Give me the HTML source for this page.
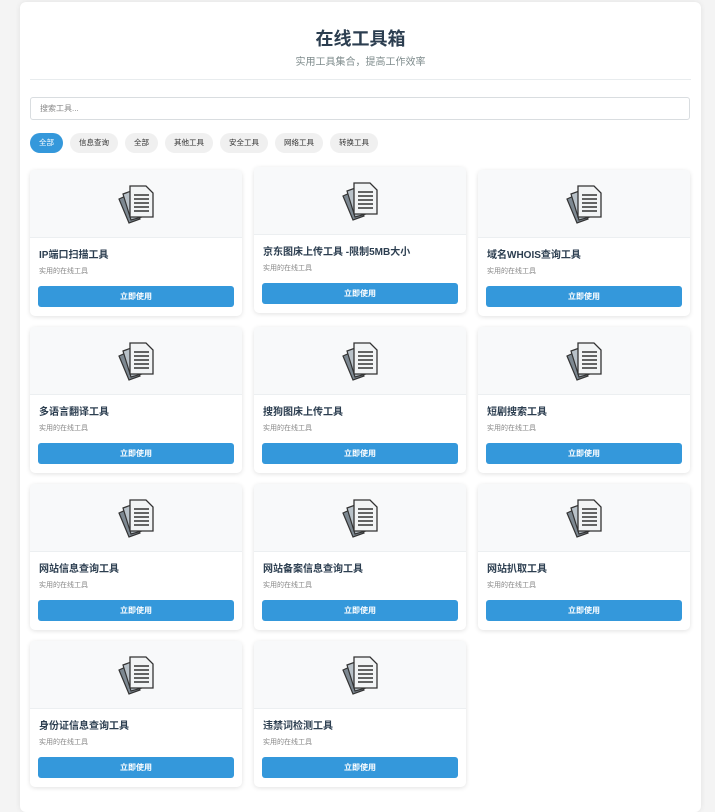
<!DOCTYPE html>
<html><head><meta charset="utf-8"><style>
*{margin:0;padding:0;box-sizing:border-box}
body{width:715px;height:800px;background:#f4f4f4;font-family:"Liberation Sans","Noto Sans CJK SC",sans-serif;overflow:hidden;position:relative}
.wrap{position:absolute;left:20px;top:2px;width:681px;height:810px;background:#fff;border-radius:6px;box-shadow:0 0 6px rgba(0,0,0,.08)}
h1{position:absolute;left:0;width:100%;top:26px;text-align:center;font-size:18px;color:#2c3e50;font-weight:bold;line-height:22px}
.sub{position:absolute;left:0;width:100%;top:54px;text-align:center;font-size:10px;color:#7f8c8d;line-height:14px}
.hr{position:absolute;left:10px;right:10px;top:77px;border-top:1px solid #e8ecee}
.search{position:absolute;left:10px;top:95px;width:660px;height:23px;border:1px solid #d9dde0;border-radius:3px;font-size:8px;color:#888;padding-left:9px;line-height:21px}
.chips{position:absolute;left:10px;top:131px;display:flex;gap:7px}
.chip{height:20px;border-radius:10px;background:#f0f0f0;color:#333;font-size:7.5px;line-height:20px;padding:0 9px}
.chip.on{background:#3498db;color:#fff}
.card{position:absolute;width:212px;height:146px;background:#fff;border-radius:5px;box-shadow:0 1px 5px rgba(0,0,0,.12);overflow:hidden}
.img{height:68px;background:#f8f9fa;border-bottom:1px solid #eceff1;display:flex;align-items:center;justify-content:center}
.t{position:absolute;left:9px;top:79px;font-size:10px;font-weight:bold;color:#2c3e50;line-height:14px;white-space:nowrap}
.s{position:absolute;left:9px;top:97px;font-size:7px;color:#888;line-height:10px}
.b{position:absolute;left:8px;right:8px;top:116px;height:21px;background:#3498db;border-radius:3px;color:#fff;font-size:8px;font-weight:bold;text-align:center;line-height:21px}
</style></head><body>
<div class="wrap">
<h1>在线工具箱</h1>
<div class="sub">实用工具集合，提高工作效率</div>
<div class="hr"></div>
<div class="search">搜索工具...</div>
<div class="chips"><span class="chip on">全部</span><span class="chip">信息查询</span><span class="chip">全部</span><span class="chip">其他工具</span><span class="chip">安全工具</span><span class="chip">网络工具</span><span class="chip">转换工具</span></div>
</div>
<svg width="0" height="0" style="position:absolute"><defs><g id="ic">
<path d="M1 15 L12 10 L22 35 L11 39 Z" fill="#7d8891" stroke="#333" stroke-width="1.2"/>
<path d="M5 10 L16 6 L24 33 L13 36 Z" fill="#b8c1c8" stroke="#333" stroke-width="1.2"/>
<path d="M12 2 L28 2 L35 9 L35 33 L12 33 Z" fill="#f2f4f5" stroke="#333" stroke-width="1.3"/>
<path d="M16 11h15M16 15h15M16 19h15M16 23h15M16 27h15" stroke="#333" stroke-width="1.5"/>
</g></defs></svg>
<div class="card" style="left:30px;top:170px"><div class="img"><svg width="37" height="40" viewBox="0 0 37 40"><use href="#ic"/></svg></div><div class="t">IP端口扫描工具</div><div class="s">实用的在线工具</div><div class="b">立即使用</div></div>
<div class="card" style="left:254px;top:167px"><div class="img"><svg width="37" height="40" viewBox="0 0 37 40"><use href="#ic"/></svg></div><div class="t">京东图床上传工具 -限制5MB大小</div><div class="s">实用的在线工具</div><div class="b">立即使用</div></div>
<div class="card" style="left:478px;top:170px"><div class="img"><svg width="37" height="40" viewBox="0 0 37 40"><use href="#ic"/></svg></div><div class="t">域名WHOIS查询工具</div><div class="s">实用的在线工具</div><div class="b">立即使用</div></div>
<div class="card" style="left:30px;top:327px"><div class="img"><svg width="37" height="40" viewBox="0 0 37 40"><use href="#ic"/></svg></div><div class="t">多语言翻译工具</div><div class="s">实用的在线工具</div><div class="b">立即使用</div></div>
<div class="card" style="left:254px;top:327px"><div class="img"><svg width="37" height="40" viewBox="0 0 37 40"><use href="#ic"/></svg></div><div class="t">搜狗图床上传工具</div><div class="s">实用的在线工具</div><div class="b">立即使用</div></div>
<div class="card" style="left:478px;top:327px"><div class="img"><svg width="37" height="40" viewBox="0 0 37 40"><use href="#ic"/></svg></div><div class="t">短剧搜索工具</div><div class="s">实用的在线工具</div><div class="b">立即使用</div></div>
<div class="card" style="left:30px;top:484px"><div class="img"><svg width="37" height="40" viewBox="0 0 37 40"><use href="#ic"/></svg></div><div class="t">网站信息查询工具</div><div class="s">实用的在线工具</div><div class="b">立即使用</div></div>
<div class="card" style="left:254px;top:484px"><div class="img"><svg width="37" height="40" viewBox="0 0 37 40"><use href="#ic"/></svg></div><div class="t">网站备案信息查询工具</div><div class="s">实用的在线工具</div><div class="b">立即使用</div></div>
<div class="card" style="left:478px;top:484px"><div class="img"><svg width="37" height="40" viewBox="0 0 37 40"><use href="#ic"/></svg></div><div class="t">网站扒取工具</div><div class="s">实用的在线工具</div><div class="b">立即使用</div></div>
<div class="card" style="left:30px;top:641px"><div class="img"><svg width="37" height="40" viewBox="0 0 37 40"><use href="#ic"/></svg></div><div class="t">身份证信息查询工具</div><div class="s">实用的在线工具</div><div class="b">立即使用</div></div>
<div class="card" style="left:254px;top:641px"><div class="img"><svg width="37" height="40" viewBox="0 0 37 40"><use href="#ic"/></svg></div><div class="t">违禁词检测工具</div><div class="s">实用的在线工具</div><div class="b">立即使用</div></div>
</body></html>
